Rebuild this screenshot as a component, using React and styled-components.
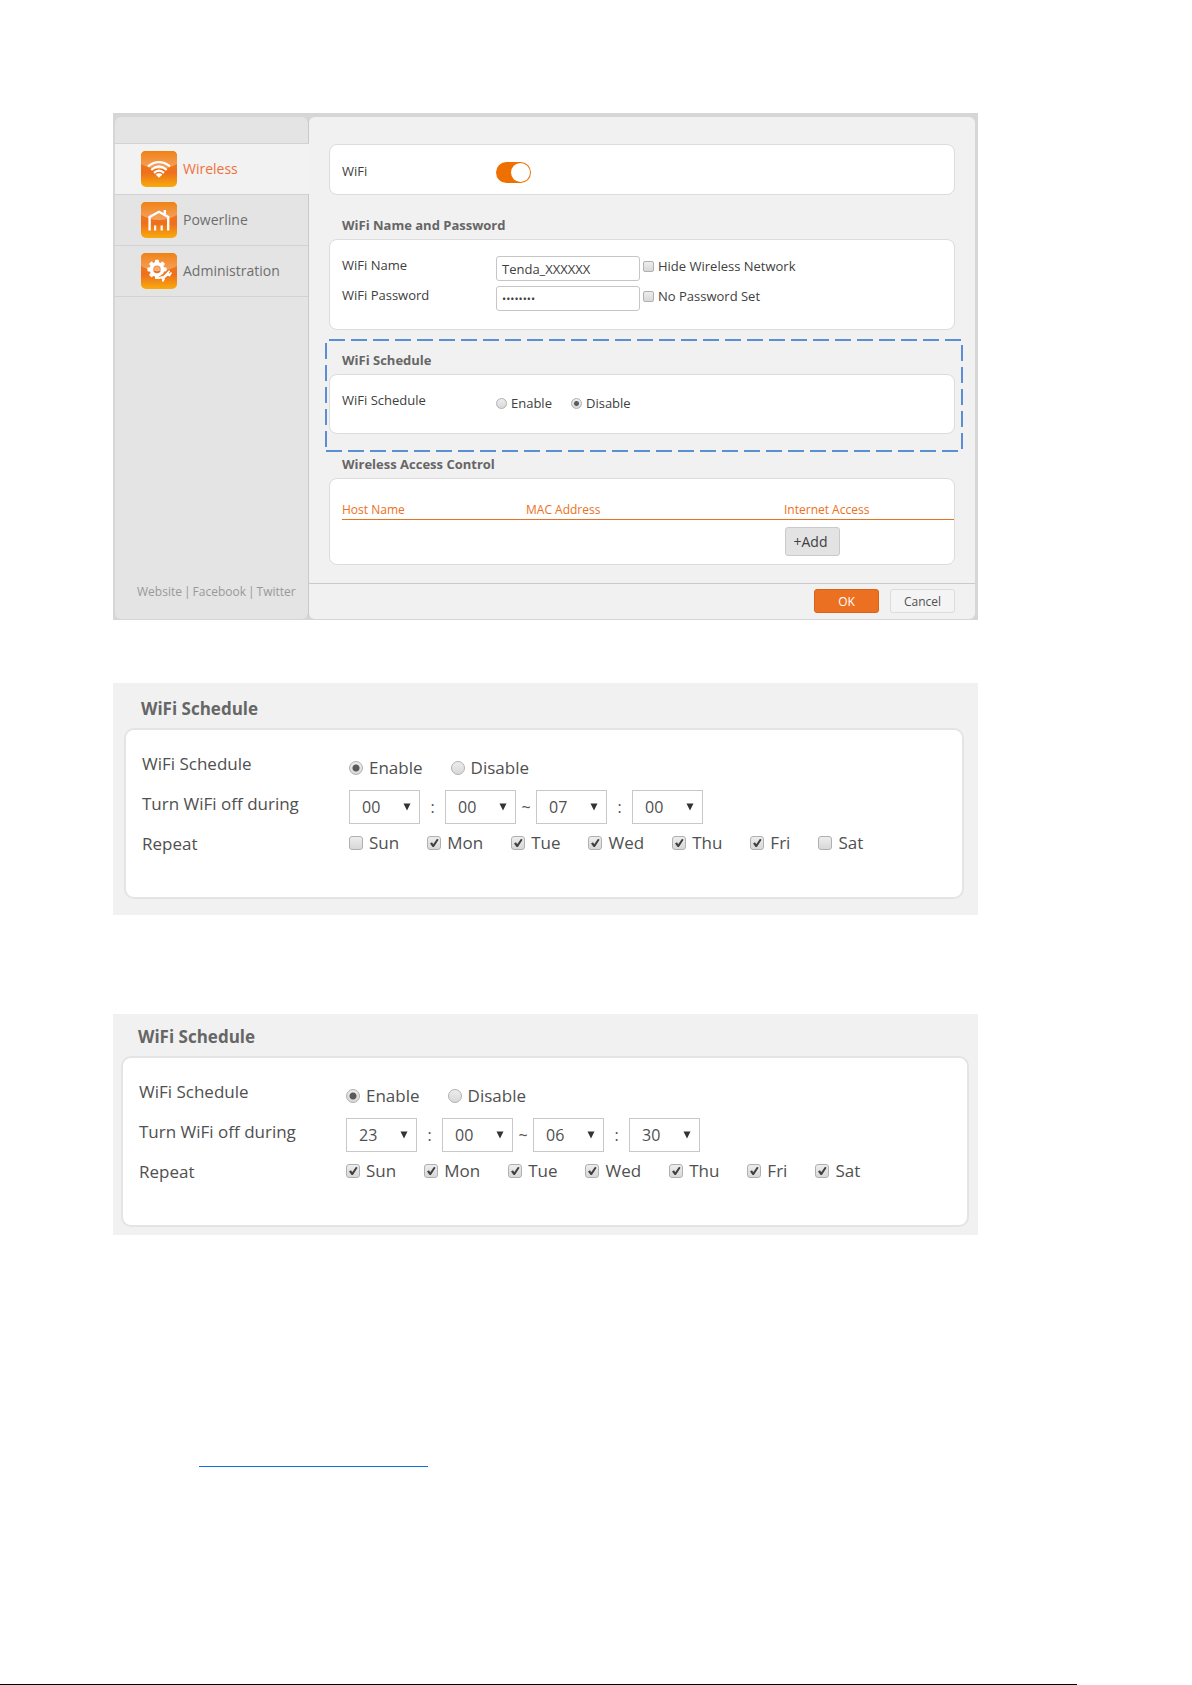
import React, { useState } from 'react';
import styled, { createGlobalStyle } from 'styled-components';

const orange = '#ec7021';
const lineColor = '#dcdcdc';
const dash = '#5a8fd4';

const tick = "url(\"data:image/svg+xml,%3Csvg xmlns='http://www.w3.org/2000/svg' viewBox='0 0 14 14'%3E%3Cpath d='M3 7.6 L5 6.3 L6.2 8.2 L10 2.8 L11.6 3.8 L6.9 11 L5.6 11 Z' fill='%23404040'/%3E%3C/svg%3E\")";
const arrow = "url(\"data:image/svg+xml,%3Csvg xmlns='http://www.w3.org/2000/svg' viewBox='0 0 8 8'%3E%3Cpath d='M0.5 0.5 H7.5 L4 7.5 Z' fill='%23333'/%3E%3C/svg%3E\")";

const GlobalStyle = createGlobalStyle`
  * {
    box-sizing: border-box;
  }

  body {
    margin: 0;
    background: #fff;
    color: #404040;
    font-family: "Open Sans", "Noto Sans", sans-serif;
    font-size: 13px;
    line-height: 20px;
  }

  input, select, button {
    margin: 0;
    font-family: inherit;
    color: inherit;
  }
`;

const Page = styled.div`
  display: flex;
  flex-direction: column;
  min-height: 100vh;
  padding-top: 113px;
`;

const Figures = styled.main`
  display: flex;
  flex-direction: column;
  margin: 0 214px 0 113px;
`;

const Screen = styled.div`
  display: flex;
  padding: 4px 3px 1px 2px;
  background: #d6d6d6;
`;

const Sidebar = styled.nav`
  display: flex;
  flex-direction: column;
  flex: 0 0 194px;
  padding-top: 26px;
  border-right: 1px solid #c9c9c9;
  border-radius: 6px;
  background: #e4e4e4;
`;

const NavItem = styled.a`
  display: flex;
  align-items: center;
  gap: 6px;
  height: 51px;
  padding-left: 26px;
  margin-right: ${({ $active }) => ($active ? '-1px' : '0')};
  border-top: 1px solid #d2d2d2;
  background: ${({ $active }) => ($active ? '#f2f2f2' : 'transparent')};
  color: ${({ $active }) => ($active ? '#f0703c' : '#6e6e6e')};
  font-size: 14px;
  text-decoration: none;
`;

const NavEnd = styled.div`
  flex: 1;
  border-top: 1px solid #d2d2d2;
`;

const SideLinks = styled.div`
  display: flex;
  gap: 2px;
  padding: 0 0 17px 22px;
  color: #999;
  font-size: 12px;
  white-space: nowrap;

  a {
    color: inherit;
    text-decoration: none;
  }
`;

const Content = styled.div`
  display: flex;
  flex-direction: column;
  flex: 1;
  border-radius: 6px;
  background: #f1f1f1;
`;

const Sections = styled.div`
  padding: 27px 20px 18px;
`;

const SectionTitle = styled.h2`
  margin: 0;
  padding: 20px 0 4px 13px;
  color: #666;
  font-size: 13px;
  line-height: 20px;
  font-weight: 700;
`;

const Card = styled.div`
  padding: ${({ $pad }) => $pad};
  border: 1px solid ${lineColor};
  border-radius: 8px;
  background: #fff;
`;

const Field = styled.div`
  display: flex;
  align-items: flex-start;

  & + & {
    margin-top: 5px;
  }
`;

const FieldName = styled.label`
  flex: 0 0 154px;
  line-height: 18px;
`;

const TextInput = styled.input`
  width: 144px;
  height: 25px;
  margin-right: 3px;
  padding: 0 5px;
  border: 1px solid #c6c6c6;
  border-radius: 3px;
  background: #fff;
  font-size: ${({ type }) => (type === 'password' ? '11px' : '13px')};
`;

const Choice = styled.label`
  display: flex;
  align-items: center;
  gap: ${({ $large }) => ($large ? '6px' : '4px')};
  white-space: nowrap;
`;

const Choices = styled.div`
  display: flex;
  align-items: center;
  gap: ${({ $gap }) => $gap};
  height: ${({ $height }) => $height};
`;

const Tick = styled.input.attrs({ type: 'checkbox' })`
  appearance: none;
  flex: none;
  width: ${({ $large }) => ($large ? '14px' : '11px')};
  height: ${({ $large }) => ($large ? '14px' : '11px')};
  border: 1px solid #b0b0b0;
  border-radius: ${({ $large }) => ($large ? '3px' : '2px')};
  background: linear-gradient(#ededed, #d8d8d8);

  &:checked {
    background: ${tick} center / 14px 14px no-repeat, linear-gradient(#ededed, #d8d8d8);
  }
`;

const Radio = styled.input.attrs({ type: 'radio' })`
  appearance: none;
  flex: none;
  width: ${({ $large }) => ($large ? '14px' : '11px')};
  height: ${({ $large }) => ($large ? '14px' : '11px')};
  border: 1px solid #b0b0b0;
  border-radius: 50%;
  background: linear-gradient(#ededed, #d8d8d8);

  &:checked {
    background:
      radial-gradient(circle, #5a5a5a ${({ $large }) => ($large ? '3px, transparent 4px' : '2px, transparent 3px')}),
      linear-gradient(#ededed, #d8d8d8);
  }
`;

const Switch = styled.input.attrs({ type: 'checkbox', role: 'switch' })`
  appearance: none;
  display: flex;
  width: 35px;
  height: 21px;
  padding: 1px;
  border-radius: 11px;
  background: #bbb;

  &::before {
    content: "";
    width: 19px;
    height: 19px;
    border-radius: 50%;
    background: #fff;
  }

  &:checked {
    justify-content: flex-end;
    background: #ee7000;
  }
`;

// dashed frame drawn over the section it points out
const Marked = styled.div`
  position: relative;

  &::after {
    content: "";
    position: absolute;
    inset: 9px -8px -18px -4px;
    pointer-events: none;
    background:
      repeating-linear-gradient(90deg, ${dash} 0 16px, transparent 16px 22px) 4px 0 / 100% 2px no-repeat,
      repeating-linear-gradient(90deg, ${dash} 0 16px, transparent 16px 22px) 1px 100% / 100% 2px no-repeat,
      repeating-linear-gradient(${dash} 0 16px, transparent 16px 22px) 0 4px / 2px calc(100% - 6px) no-repeat,
      repeating-linear-gradient(${dash} 0 16px, transparent 16px 22px) 100% 6px / 2px calc(100% - 8px) no-repeat;
  }
`;

const HostTable = styled.table`
  width: 100%;
  border-collapse: collapse;
  table-layout: fixed;

  th {
    padding: 0 0 1px;
    border-bottom: 1px solid ${orange};
    color: ${orange};
    font-size: 12px;
    font-weight: 400;
    line-height: 16px;
    text-align: left;
  }

  th:nth-child(1) {
    width: 184px;
  }

  th:nth-child(2) {
    width: 258px;
  }

  td {
    padding: 7px 0 0 1px;
  }
`;

const AddButton = styled.button`
  display: block;
  width: 55px;
  height: 29px;
  padding: 0 4px 0 0;
  border: 1px solid #cacaca;
  border-radius: 3px;
  background: #e3e3e3;
  font-size: 14px;
`;

const Actions = styled.div`
  display: flex;
  justify-content: flex-end;
  gap: 11px;
  padding: 5px 20px 6px;
  border-top: 1px solid #cacaca;
`;

const ActionButton = styled.button`
  width: 65px;
  height: 24px;
  padding: 0;
  border: 1px solid ${({ $primary }) => ($primary ? '#d8641c' : lineColor)};
  border-radius: 3px;
  background: ${({ $primary }) => ($primary ? orange : '#f4f4f4')};
  color: ${({ $primary }) => ($primary ? '#fff' : '#505050')};
  font-size: 12px;
`;

const Panel = styled.section`
  margin-top: ${({ $gap }) => $gap};
  padding: ${({ $inset }) => $inset};
  background: #f1f1f1;
`;

const PanelTitle = styled.h2`
  margin: 0;
  padding-left: 17px;
  color: #666;
  font-size: 17px;
  font-weight: 700;
  line-height: 24px;
`;

const PanelCard = styled.div`
  margin-top: 7px;
  padding: 20px 0 27px 16px;
  border: 2px solid #e4e4e4;
  border-radius: 10px;
  background: #fff;
  color: #505050;
  font-size: 17px;
`;

const PanelRow = styled.div`
  display: flex;
  align-items: flex-start;
  height: 40px;
`;

const PanelLabel = styled.span`
  flex: 0 0 207px;
  line-height: 28px;
`;

const TimeSelect = styled.select`
  appearance: none;
  width: 71px;
  height: 34px;
  padding: 0 0 0 12px;
  border: 1px solid #c8c8c8;
  border-radius: 0;
  background: #fff ${arrow} right 8px center / 8px 8px no-repeat;
  font-size: 16px;
`;

const Between = styled.span`
  width: ${({ $wide }) => ($wide ? '25px' : '20px')};
  font-size: 16px;
  text-align: center;
`;

const LinkRule = styled.hr`
  width: 229px;
  margin: 231px 0 0 86px;
  border: 0;
  border-top: 1px solid #0f6fe0;
`;

const PageRule = styled.hr`
  align-self: stretch;
  margin: auto 115px 0 0;
  border: 0;
  border-top: 1px solid #000;
`;

function Tile({ id, children }) {
  return (
    <svg width="36" height="36" viewBox="0 0 36 36" aria-hidden="true">
      <defs>
        <linearGradient id={`${id}-base`} x1="0" y1="0" x2="0" y2="1">
          <stop offset="0" stopColor="#f08214" />
          <stop offset="0.6" stopColor="#ee6f1c" />
          <stop offset="1" stopColor="#f8ab0c" />
        </linearGradient>
        <linearGradient id={`${id}-shine`} x1="0" y1="0" x2="0" y2="1">
          <stop offset="0" stopColor="#f08214" />
          <stop offset="1" stopColor="#f5a264" />
        </linearGradient>
      </defs>
      <rect width="36" height="36" rx="5" fill={`url(#${id}-base)`} />
      <path d="M0 5 Q0 0 5 0 H31 Q36 0 36 5 V13 Q18 23 0 13 Z" fill={`url(#${id}-shine)`} />
      {children}
    </svg>
  );
}

function WifiIcon() {
  return (
    <Tile id="wifi">
      <g fill="none" stroke="#fff" strokeWidth="2.2">
        <path d="M7 15.4 Q18 7 29 15.4" />
        <path d="M10.2 18.8 Q18 12.2 25.8 18.8" />
        <path d="M13 21.8 Q18 17.4 23 21.8" />
      </g>
      <path d="M14.6 23.6 Q18 21 21.4 23.6 L18 26.8 Z" fill="#fff" />
    </Tile>
  );
}

function HouseIcon() {
  return (
    <Tile id="house">
      <path d="M8.6 28.5 V15 L18 9.8 L27.2 15 V28.5" fill="none" stroke="#fff" strokeWidth="2.4" />
      <path d="M22.6 8 H25 V14 H22.6 Z M13 23.5 H15.2 V28.5 H13 Z M19.6 23.5 H21.8 V28.5 H19.6 Z" fill="#fff" />
    </Tile>
  );
}

function GearIcon() {
  const teeth = [0, 45, 90, 135, 180, 225, 270, 315];
  return (
    <Tile id="gear">
      <circle cx="16" cy="16.4" r="5.6" fill="none" stroke="#fff" strokeWidth="3.6" />
      {teeth.map((angle) => (
        <rect key={angle} x="14" y="6.8" width="4" height="4" rx="0.8" fill="#fff" transform={`rotate(${angle} 16 16.4)`} />
      ))}
      <circle cx="16" cy="16.4" r="1.6" fill="none" stroke="#fff" strokeWidth="0.8" opacity="0.5" />
      <path d="M20 26 L27 20.5" stroke="#ee7a1c" strokeWidth="6" />
      <path d="M20.5 26 L28 20" stroke="#fff" strokeWidth="2.8" />
      <path d="M28.6 17.8 L26 20.6 L28.4 22.4 L30.4 19.6 M17.6 25.4 L21 24 L23 26.2 L21.4 28.6" fill="none" stroke="#fff" strokeWidth="1.8" />
    </Tile>
  );
}

const DAYS = ['Sun', 'Mon', 'Tue', 'Wed', 'Thu', 'Fri', 'Sat'];
const HOURS = Array.from({ length: 24 }, (_, i) => String(i).padStart(2, '0'));
const MINUTES = ['00', '30'];

function OnOff({ name, enabled, large, height }) {
  const [on, setOn] = useState(enabled);
  return (
    <Choices $gap={large ? '28px' : '19px'} $height={height}>
      <Choice $large={large}>
        <Radio name={name} $large={large} checked={on} onChange={() => setOn(true)} />
        Enable
      </Choice>
      <Choice $large={large}>
        <Radio name={name} $large={large} checked={!on} onChange={() => setOn(false)} />
        Disable
      </Choice>
    </Choices>
  );
}

function Time({ label, value, options }) {
  return (
    <TimeSelect aria-label={label} defaultValue={value}>
      {options.map((option) => (
        <option key={option}>{option}</option>
      ))}
    </TimeSelect>
  );
}

function SchedulePanel({ name, from, to, days, gap, inset }) {
  return (
    <Panel $gap={gap} $inset={inset}>
      <PanelTitle>WiFi Schedule</PanelTitle>
      <PanelCard>
        <PanelRow>
          <PanelLabel>WiFi Schedule</PanelLabel>
          <OnOff name={name} enabled large height="36px" />
        </PanelRow>
        <PanelRow>
          <PanelLabel>Turn WiFi off during</PanelLabel>
          <Choices>
            <Time label="From hour" value={from[0]} options={HOURS} />
            <Between $wide>:</Between>
            <Time label="From minute" value={from[1]} options={MINUTES} />
            <Between>~</Between>
            <Time label="To hour" value={to[0]} options={HOURS} />
            <Between $wide>:</Between>
            <Time label="To minute" value={to[1]} options={MINUTES} />
          </Choices>
        </PanelRow>
        <PanelRow>
          <PanelLabel>Repeat</PanelLabel>
          <Choices $gap="28px" $height="26px">
            {DAYS.map((day) => (
              <Choice key={day} $large>
                <Tick $large defaultChecked={days.includes(day)} />
                {day}
              </Choice>
            ))}
          </Choices>
        </PanelRow>
      </PanelCard>
    </Panel>
  );
}

function WirelessScreen() {
  return (
    <Screen>
      <Sidebar>
        <NavItem href="#wireless" $active>
          <WifiIcon />
          Wireless
        </NavItem>
        <NavItem href="#powerline">
          <HouseIcon />
          Powerline
        </NavItem>
        <NavItem href="#administration">
          <GearIcon />
          Administration
        </NavItem>
        <NavEnd />
        <SideLinks>
          <a href="#website">Website</a>
          <span>|</span>
          <a href="#facebook">Facebook</a>
          <span>|</span>
          <a href="#twitter">Twitter</a>
        </SideLinks>
      </Sidebar>
      <Content>
        <Sections>
          <Card $pad="17px 0 11px 12px">
            <Field>
              <FieldName htmlFor="wifi-on">WiFi</FieldName>
              <Switch id="wifi-on" defaultChecked />
            </Field>
          </Card>
          <SectionTitle>WiFi Name and Password</SectionTitle>
          <Card $pad="16px 0 18px 12px">
            <Field>
              <FieldName htmlFor="wifi-name">WiFi Name</FieldName>
              <TextInput id="wifi-name" type="text" defaultValue="Tenda_XXXXXX" />
              <Choice>
                <Tick />
                Hide Wireless Network
              </Choice>
            </Field>
            <Field>
              <FieldName htmlFor="wifi-password">WiFi Password</FieldName>
              <TextInput id="wifi-password" type="password" defaultValue="12345678" />
              <Choice>
                <Tick />
                No Password Set
              </Choice>
            </Field>
          </Card>
          <Marked>
            <SectionTitle>WiFi Schedule</SectionTitle>
            <Card $pad="16px 0 18px 12px">
              <Field>
                <FieldName as="span">WiFi Schedule</FieldName>
                <OnOff name="schedule" enabled={false} height="24px" />
              </Field>
            </Card>
          </Marked>
          <SectionTitle>Wireless Access Control</SectionTitle>
          <Card $pad="23px 0 8px 12px">
            <HostTable>
              <thead>
                <tr>
                  <th>Host Name</th>
                  <th>MAC Address</th>
                  <th>Internet Access</th>
                </tr>
              </thead>
              <tbody>
                <tr>
                  <td />
                  <td />
                  <td>
                    <AddButton type="button">+Add</AddButton>
                  </td>
                </tr>
              </tbody>
            </HostTable>
          </Card>
        </Sections>
        <Actions>
          <ActionButton type="button" $primary>OK</ActionButton>
          <ActionButton type="button">Cancel</ActionButton>
        </Actions>
      </Content>
    </Screen>
  );
}

export default function App() {
  return (
    <Page>
      <GlobalStyle />
      <Figures>
        <WirelessScreen />
        <SchedulePanel
          name="schedule-weekdays"
          from={['00', '00']}
          to={['07', '00']}
          days={DAYS.slice(1, 6)}
          gap="63px"
          inset="14px 14px 16px 11px"
        />
        <SchedulePanel
          name="schedule-daily"
          from={['23', '00']}
          to={['06', '30']}
          days={DAYS}
          gap="99px"
          inset="11px 9px 8px 8px"
        />
        <LinkRule />
      </Figures>
      <PageRule />
    </Page>
  );
}
